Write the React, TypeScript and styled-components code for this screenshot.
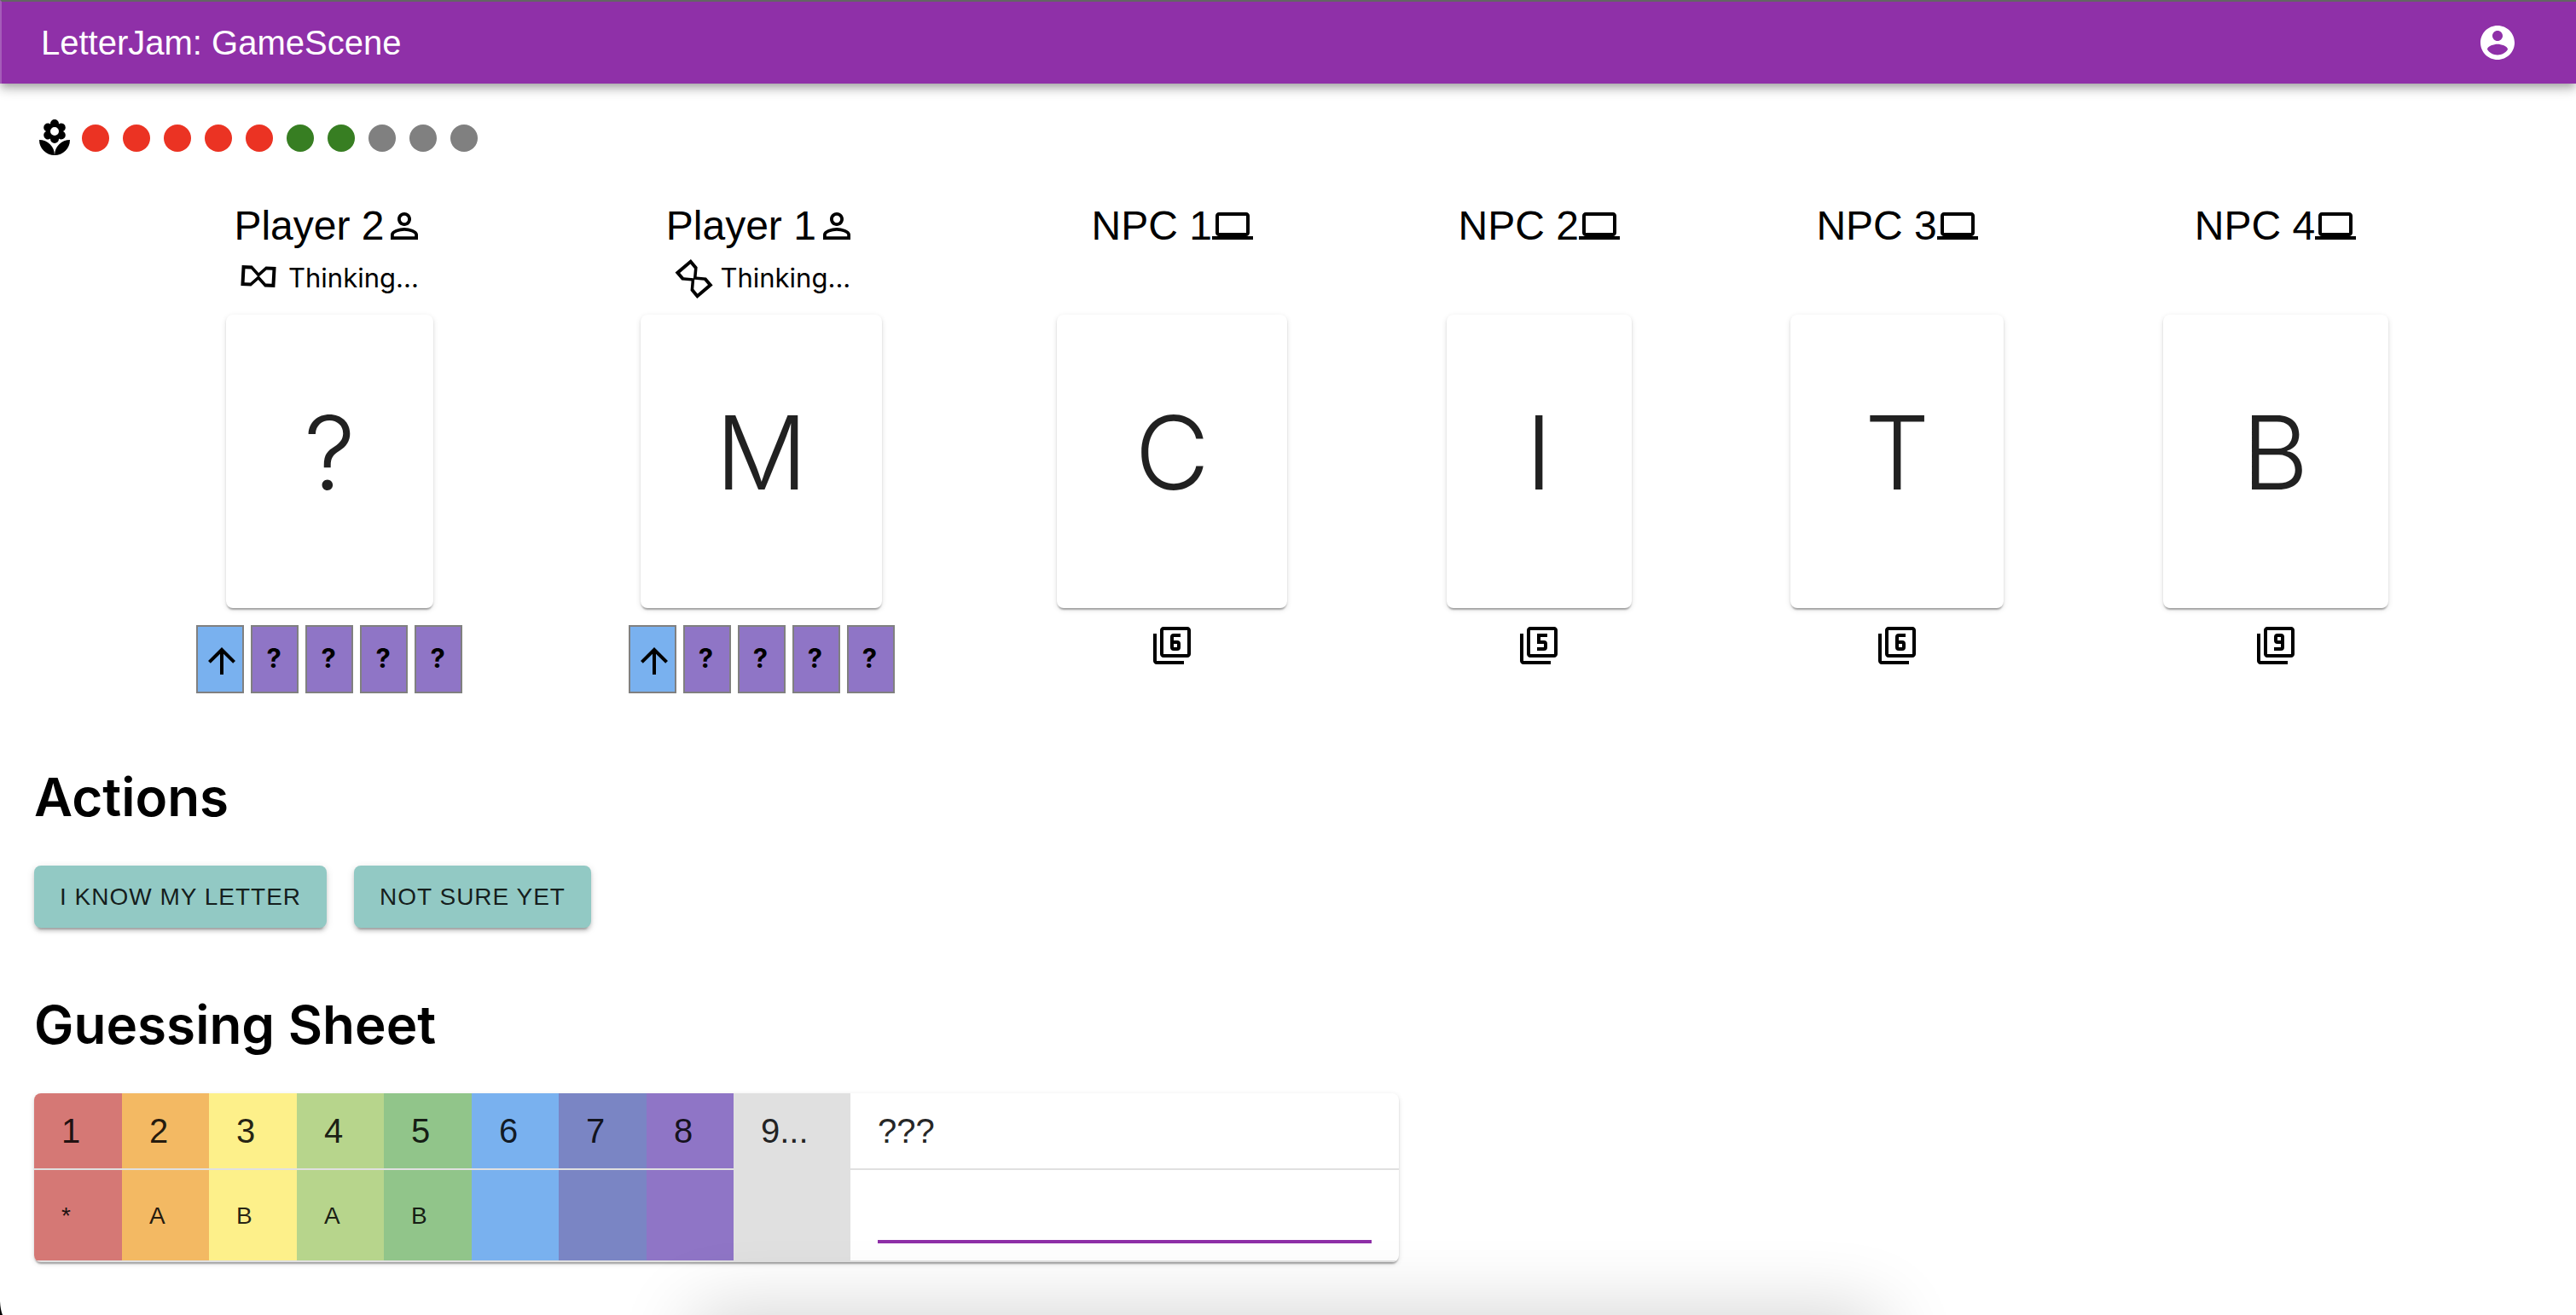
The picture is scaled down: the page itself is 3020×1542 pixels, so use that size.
import React from "react";
import styled, { createGlobalStyle } from "styled-components";
import {
  MdArrowUpward,
  MdComputer,
  MdFiberManualRecord,
  MdFilter5,
  MdFilter6,
  MdFilter9,
  MdHourglassEmpty,
  MdLocalFlorist,
  MdPersonOutline,
} from "react-icons/md";

const color = {
  primary: "#8f30a8",
  red: "#eb3323",
  green: "#377e22",
  grey: "#808080",
  ink: "rgba(0, 0, 0, 0.87)",
  line: "#e0e0e0",
  action: "#92c9c4",
  sky: "#79b1ef",
  violet: "#8f75c6",
};

const helvetica = `Helvetica, "Liberation Sans", Arial, sans-serif`;
const system = `Inter, "Liberation Sans", sans-serif`;
const raised =
  "0 4px 2px -2px rgba(0,0,0,.2), 0 2px 2px rgba(0,0,0,.14), 0 2px 6px rgba(0,0,0,.12)";

const GlobalStyle = createGlobalStyle`
  *, *::before, *::after { box-sizing: border-box; }
  body {
    margin: 0;
    min-height: 100vh;
    background: #fff;
    color: #000;
    font-family: ${system};
    font-size: 32px;
    overflow-x: hidden;
  }
`;

const AppBar = styled.header`
  display: flex;
  align-items: center;
  justify-content: space-between;
  height: 98px;
  padding: 0 44px 0 46px;
  color: #fff;
  background: ${color.primary};
  border-top: 2px solid #646464;
  border-left: 2px solid #a55cb9;
  box-shadow: 0 4px 8px -2px rgba(0,0,0,.2), 0 8px 10px rgba(0,0,0,.14),
    0 2px 20px rgba(0,0,0,.12);
`;

const AppTitle = styled.h1`
  margin: 0;
  font: 400 40px/64px ${helvetica};
`;

const AccountButton = styled.button`
  display: flex;
  padding: 24px;
  border: 0;
  background: none;
  color: inherit;
  cursor: pointer;
`;

const Main = styled.main`
  padding: 40px 34px 62px 40px;
`;

const TokenRow = styled.div`
  display: flex;
`;

const Token = styled(MdFiberManualRecord)<{ $tone: string }>`
  color: ${(p) => p.$tone};
`;

const Players = styled.section`
  display: flex;
  justify-content: space-evenly;
  align-items: flex-start;
  margin-top: 48px;
`;

const Player = styled.article`
  display: flex;
  flex-direction: column;
  align-items: center;
`;

const PlayerName = styled.h2`
  display: flex;
  align-items: center;
  height: 62px;
  margin: 0;
  font: 400 48px/62px ${helvetica};
`;

const Status = styled.div`
  display: flex;
  align-items: center;
  gap: 8px;
  height: 60px;
  font-size: 31px;
  line-height: 40px;
`;

const Spinner = styled.svg`
  overflow: visible;
`;

const LetterCard = styled.div<{ $width: number }>`
  width: ${(p) => p.$width}px;
  height: 344px;
  margin: 13px 0 20px;
  padding-top: 90px;
  border-radius: 8px;
  background: #fff;
  box-shadow: ${raised};
  color: ${color.ink};
  font-size: 120px;
  font-weight: 300;
  line-height: 144px;
  text-align: center;
`;

const Hand = styled.div`
  display: flex;
  gap: 8px;
  padding: 0 4px;
`;

const Tile = styled.div<{ $current?: boolean }>`
  display: flex;
  align-items: center;
  width: 56px;
  height: 80px;
  padding: ${(p) => (p.$current ? "4px 0 0 4px" : "0 0 4px 16px")};
  border: 2px solid ${color.grey};
  background: ${(p) => (p.$current ? color.sky : color.violet)};
  font-size: 31px;
  font-weight: 700;

  svg {
    flex: none;
  }
`;

const Section = styled.section<{ $top: number }>`
  margin-top: ${(p) => p.$top}px;
`;

const SectionTitle = styled.h2`
  margin: 0 0 41px;
  font-size: 62px;
  font-weight: 600;
  line-height: 78px;
`;

const ButtonRow = styled.div`
  display: flex;
  gap: 32px;
`;

const ActionButton = styled.button`
  height: 73px;
  padding: 0 30px;
  border: 0;
  border-radius: 8px;
  background: ${color.action};
  box-shadow: 0 6px 2px -4px rgba(0,0,0,.2), 0 4px 4px rgba(0,0,0,.14),
    0 2px 10px rgba(0,0,0,.12);
  color: ${color.ink};
  font: 400 28px/48px ${helvetica};
  letter-spacing: 1px;
  text-transform: uppercase;
  cursor: pointer;
`;

const Sheet = styled.table`
  border-collapse: separate;
  border-spacing: 0;
  border-radius: 8px;
  overflow: hidden;
  background: #fff;
  box-shadow: ${raised};
  color: ${color.ink};
  font-family: ${helvetica};
`;

const HeadCell = styled.th<{ $fill?: string; $width: number }>`
  width: ${(p) => p.$width}px;
  height: 90px;
  padding: 0 32px;
  border-bottom: 2px solid ${color.line};
  background: ${(p) => p.$fill || "transparent"};
  font-size: 40px;
  font-weight: 400;
  text-align: left;
`;

const LetterCell = styled.td<{ $fill?: string }>`
  height: 108px;
  padding: 22px 32px 20px;
  border-bottom: 2px solid ${color.line};
  background: ${(p) => p.$fill || "transparent"};
  font-size: 28px;
`;

const GuessInput = styled.input`
  display: block;
  width: 100%;
  height: 64px;
  padding: 12px 0 10px;
  border: 0;
  border-bottom: 4px solid ${color.primary};
  outline: 0;
  background: none;
  color: inherit;
  font: 400 32px/38px ${helvetica};
`;

const BottomShade = styled.div`
  position: fixed;
  right: 27%;
  bottom: -80px;
  left: 27%;
  height: 80px;
  box-shadow: 0 0 90px rgba(0, 0, 0, 0.2);
  pointer-events: none;
`;

const WindowCorner = styled.svg`
  position: fixed;
  bottom: 0;
  left: 0;
`;

const AccountIcon = () => (
  <svg width="48" height="48" viewBox="0 0 24 24" fill="currentColor" aria-hidden="true">
    <path d="M12 2C6.48 2 2 6.48 2 12s4.48 10 10 10 10-4.48 10-10S17.52 2 12 2zm0 3c1.66 0 3 1.34 3 3s-1.34 3-3 3-3-1.34-3-3 1.34-3 3-3zm0 14.2c-2.5 0-4.71-1.28-6-3.22.03-1.99 4-3.08 6-3.08 1.99 0 5.97 1.09 6 3.08-1.29 1.94-3.5 3.22-6 3.22z" />
  </svg>
);

const Hourglass = ({ turn }: { turn: string }) => (
  <Spinner width="48" height="48" viewBox="0 0 24 24" aria-hidden="true">
    <g transform={turn}>
      <MdHourglassEmpty size={24} />
    </g>
  </Spinner>
);

type Seat = {
  name: string;
  letter: string;
  cardWidth: number;
  turn?: string;
  deck?: React.ReactNode;
};

const seats: Seat[] = [
  { name: "Player 2", letter: "?", cardWidth: 243, turn: "translate(-1.5 -1) rotate(93 12 12)" },
  { name: "Player 1", letter: "M", cardWidth: 283, turn: "translate(0.8 0.5) rotate(-40 12 12)" },
  { name: "NPC 1", letter: "C", cardWidth: 270, deck: <MdFilter6 size={48} /> },
  { name: "NPC 2", letter: "I", cardWidth: 217, deck: <MdFilter5 size={48} /> },
  { name: "NPC 3", letter: "T", cardWidth: 250, deck: <MdFilter6 size={48} /> },
  { name: "NPC 4", letter: "B", cardWidth: 264, deck: <MdFilter9 size={48} /> },
];

const tokens = [
  ...Array(5).fill(color.red),
  ...Array(2).fill(color.green),
  ...Array(3).fill(color.grey),
];

const columns = [
  { label: "1", guess: "*", fill: "#d57875", width: 103 },
  { label: "2", guess: "A", fill: "#f3b963", width: 102 },
  { label: "3", guess: "B", fill: "#fdf08a", width: 103 },
  { label: "4", guess: "A", fill: "#b7d58c", width: 102 },
  { label: "5", guess: "B", fill: "#91c58a", width: 103 },
  { label: "6", guess: "", fill: color.sky, width: 102 },
  { label: "7", guess: "", fill: "#7a85c4", width: 103 },
  { label: "8", guess: "", fill: color.violet, width: 102 },
  { label: "9...", guess: "", fill: color.line, width: 137 },
];

export default function App() {
  return (
    <>
      <GlobalStyle />
      <AppBar>
        <AppTitle>LetterJam: GameScene</AppTitle>
        <AccountButton aria-label="Account">
          <AccountIcon />
        </AccountButton>
      </AppBar>

      <Main>
        <TokenRow>
          <MdLocalFlorist size={48} />
          {tokens.map((tone, i) => (
            <Token key={i} size={48} $tone={tone} />
          ))}
        </TokenRow>

        <Players>
          {seats.map((seat) => (
            <Player key={seat.name}>
              <PlayerName>
                {seat.name}
                {seat.turn ? <MdPersonOutline size={48} /> : <MdComputer size={48} />}
              </PlayerName>
              <Status>
                {seat.turn && (
                  <>
                    <Hourglass turn={seat.turn} />
                    <span>Thinking...</span>
                  </>
                )}
              </Status>
              <LetterCard $width={seat.cardWidth}>{seat.letter}</LetterCard>
              {seat.deck || (
                <Hand>
                  <Tile $current>
                    <MdArrowUpward size={48} />
                  </Tile>
                  <Tile>?</Tile>
                  <Tile>?</Tile>
                  <Tile>?</Tile>
                  <Tile>?</Tile>
                </Hand>
              )}
            </Player>
          ))}
        </Players>

        <Section $top={83}>
          <SectionTitle>Actions</SectionTitle>
          <ButtonRow>
            <ActionButton>I know my letter</ActionButton>
            <ActionButton>Not sure yet</ActionButton>
          </ButtonRow>
        </Section>

        <Section $top={75}>
          <SectionTitle>Guessing Sheet</SectionTitle>
          <Sheet>
            <thead>
              <tr>
                {columns.map((c) => (
                  <HeadCell key={c.label} scope="col" $fill={c.fill} $width={c.width}>
                    {c.label}
                  </HeadCell>
                ))}
                <HeadCell scope="col" id="word" $width={643}>
                  ???
                </HeadCell>
              </tr>
            </thead>
            <tbody>
              <tr>
                {columns.map((c) => (
                  <LetterCell key={c.label} $fill={c.fill}>
                    {c.guess}
                  </LetterCell>
                ))}
                <LetterCell>
                  <GuessInput type="text" aria-labelledby="word" />
                </LetterCell>
              </tr>
            </tbody>
          </Sheet>
        </Section>
      </Main>

      <BottomShade />
      <WindowCorner width="4" height="16" viewBox="0 0 4 16" aria-hidden="true">
        <path d="M0 0Q.5 10 3 16H0Z" />
      </WindowCorner>
    </>
  );
}
